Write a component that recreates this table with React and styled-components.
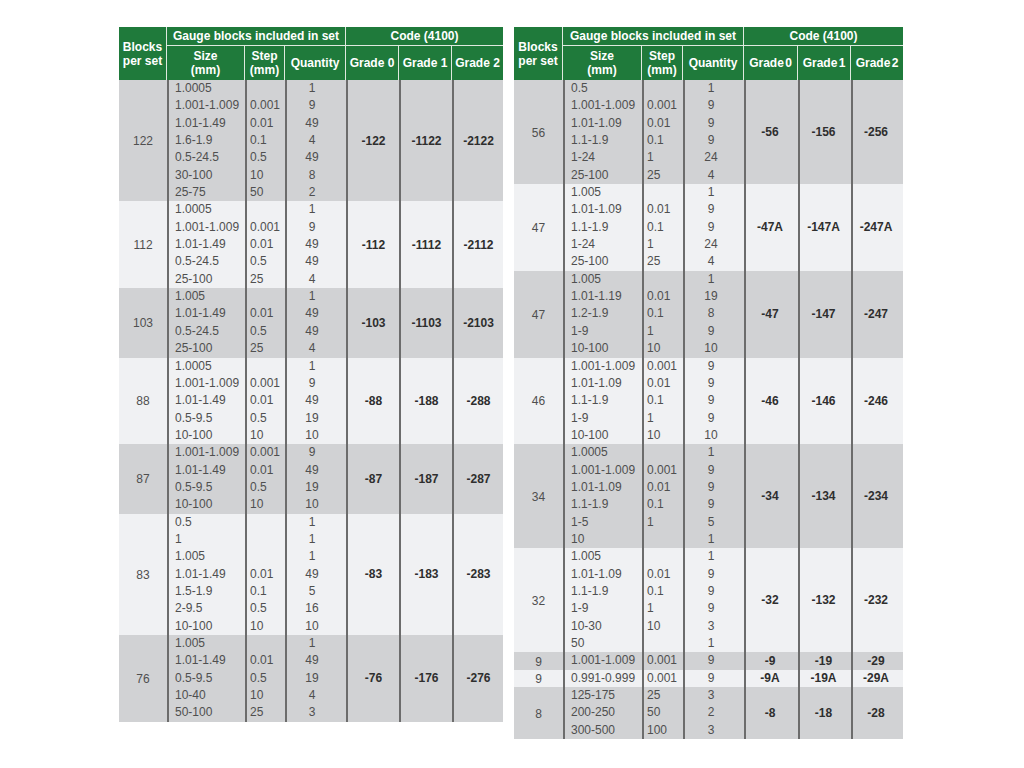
import React from "react";
import styled, { createGlobalStyle } from "styled-components";

const GlobalStyle = createGlobalStyle`
  body {
    margin: 0;
    background: #ffffff;
    font-family: "Liberation Sans", Arial, sans-serif;
  }
`;

const leftSets = [
  { n: "122", codes: ["-122", "-1122", "-2122"], rows: [["1.0005", "", "1"], ["1.001-1.009", "0.001", "9"], ["1.01-1.49", "0.01", "49"], ["1.6-1.9", "0.1", "4"], ["0.5-24.5", "0.5", "49"], ["30-100", "10", "8"], ["25-75", "50", "2"]] },
  { n: "112", codes: ["-112", "-1112", "-2112"], rows: [["1.0005", "", "1"], ["1.001-1.009", "0.001", "9"], ["1.01-1.49", "0.01", "49"], ["0.5-24.5", "0.5", "49"], ["25-100", "25", "4"]] },
  { n: "103", codes: ["-103", "-1103", "-2103"], rows: [["1.005", "", "1"], ["1.01-1.49", "0.01", "49"], ["0.5-24.5", "0.5", "49"], ["25-100", "25", "4"]] },
  { n: "88", codes: ["-88", "-188", "-288"], rows: [["1.0005", "", "1"], ["1.001-1.009", "0.001", "9"], ["1.01-1.49", "0.01", "49"], ["0.5-9.5", "0.5", "19"], ["10-100", "10", "10"]] },
  { n: "87", codes: ["-87", "-187", "-287"], rows: [["1.001-1.009", "0.001", "9"], ["1.01-1.49", "0.01", "49"], ["0.5-9.5", "0.5", "19"], ["10-100", "10", "10"]] },
  { n: "83", codes: ["-83", "-183", "-283"], rows: [["0.5", "", "1"], ["1", "", "1"], ["1.005", "", "1"], ["1.01-1.49", "0.01", "49"], ["1.5-1.9", "0.1", "5"], ["2-9.5", "0.5", "16"], ["10-100", "10", "10"]] },
  { n: "76", codes: ["-76", "-176", "-276"], rows: [["1.005", "", "1"], ["1.01-1.49", "0.01", "49"], ["0.5-9.5", "0.5", "19"], ["10-40", "10", "4"], ["50-100", "25", "3"]] },
];

const rightSets = [
  { n: "56", codes: ["-56", "-156", "-256"], rows: [["0.5", "", "1"], ["1.001-1.009", "0.001", "9"], ["1.01-1.09", "0.01", "9"], ["1.1-1.9", "0.1", "9"], ["1-24", "1", "24"], ["25-100", "25", "4"]] },
  { n: "47", codes: ["-47A", "-147A", "-247A"], rows: [["1.005", "", "1"], ["1.01-1.09", "0.01", "9"], ["1.1-1.9", "0.1", "9"], ["1-24", "1", "24"], ["25-100", "25", "4"]] },
  { n: "47", codes: ["-47", "-147", "-247"], rows: [["1.005", "", "1"], ["1.01-1.19", "0.01", "19"], ["1.2-1.9", "0.1", "8"], ["1-9", "1", "9"], ["10-100", "10", "10"]] },
  { n: "46", codes: ["-46", "-146", "-246"], rows: [["1.001-1.009", "0.001", "9"], ["1.01-1.09", "0.01", "9"], ["1.1-1.9", "0.1", "9"], ["1-9", "1", "9"], ["10-100", "10", "10"]] },
  { n: "34", codes: ["-34", "-134", "-234"], rows: [["1.0005", "", "1"], ["1.001-1.009", "0.001", "9"], ["1.01-1.09", "0.01", "9"], ["1.1-1.9", "0.1", "9"], ["1-5", "1", "5"], ["10", "", "1"]] },
  { n: "32", codes: ["-32", "-132", "-232"], rows: [["1.005", "", "1"], ["1.01-1.09", "0.01", "9"], ["1.1-1.9", "0.1", "9"], ["1-9", "1", "9"], ["10-30", "10", "3"], ["50", "", "1"]] },
  { n: "9", codes: ["-9", "-19", "-29"], rows: [["1.001-1.009", "0.001", "9"]] },
  { n: "9", codes: ["-9A", "-19A", "-29A"], rows: [["0.991-0.999", "0.001", "9"]] },
  { n: "8", codes: ["-8", "-18", "-28"], rows: [["125-175", "25", "3"], ["200-250", "50", "2"], ["300-500", "100", "3"]] },
];

const Page = styled.div`
  display: flex;
  align-items: flex-start;
  gap: 11px;
  padding: 27px 0 0 119px;
`;

const Table = styled.div`
  display: grid;
  grid-template-columns: ${(p) => p.$cols};
  grid-template-rows: 19px 34px;
  grid-auto-rows: auto;
  color: #4f4f4f;
  font-size: 12px;
`;

const HeadCell = styled.div`
  background: #1f7a3b;
  color: #ffffff;
  font-weight: bold;
  font-size: 12px;
  line-height: 14px;
  display: flex;
  align-items: center;
  justify-content: center;
  text-align: center;
  box-sizing: border-box;
  border-right: ${(p) => (p.$last ? "none" : "1px solid #dfe9df")};
  border-bottom: ${(p) => (p.$top ? "1px solid #dfe9df" : "none")};
  grid-row: ${(p) => p.$row || "auto"};
  grid-column: ${(p) => p.$col || "auto"};
  word-spacing: ${(p) => (p.$tight ? "-2px" : "normal")};
`;

const Cell = styled.div`
  background: ${(p) => (p.$shade ? "#d1d2d4" : "#f0f1f3")};
  box-sizing: border-box;
  border-left: ${(p) => (p.$first ? "none" : "2px solid #6c6c6c")};
`;

const BlockCell = styled(Cell)`
  display: flex;
  align-items: center;
  justify-content: center;
  padding-top: 1px;
`;

const ListCell = styled(Cell)`
  padding-left: ${(p) => p.$pad || "0"};
  padding-right: ${(p) => p.$padRight || "0"};
  text-align: ${(p) => p.$align || "left"};
`;

const Line = styled.div`
  height: 17.35px;
  line-height: 17.35px;
  white-space: nowrap;
`;

const CodeCell = styled(Cell)`
  display: flex;
  align-items: center;
  justify-content: center;
  padding-right: ${(p) => p.$padRight || "0"};
  font-weight: bold;
  color: #2e2e2e;
`;

const GaugeTable = ({ sets, cols, tight, qtyPad }) => (
  <Table $cols={cols}>
    <HeadCell $row="1 / span 2">Blocks<br />per set</HeadCell>
    <HeadCell $col="2 / span 3" $top>Gauge blocks included in set</HeadCell>
    <HeadCell $col="5 / span 3" $top $last>Code (4100)</HeadCell>
    <HeadCell>Size<br />(mm)</HeadCell>
    <HeadCell>Step<br />(mm)</HeadCell>
    <HeadCell>Quantity</HeadCell>
    <HeadCell $tight={tight}>Grade 0</HeadCell>
    <HeadCell $tight={tight}>Grade 1</HeadCell>
    <HeadCell $tight={tight} $last>Grade 2</HeadCell>
    {sets.map((set, i) => {
      const shade = i % 2 === 0;
      return (
        <React.Fragment key={i}>
          <BlockCell $shade={shade} $first>{set.n}</BlockCell>
          <ListCell $shade={shade} $pad="6px">
            {set.rows.map((r, j) => <Line key={j}>{r[0]}</Line>)}
          </ListCell>
          <ListCell $shade={shade} $pad="3px">
            {set.rows.map((r, j) => <Line key={j}>{r[1]}</Line>)}
          </ListCell>
          <ListCell $shade={shade} $align="center" $padRight={qtyPad}>
            {set.rows.map((r, j) => <Line key={j}>{r[2]}</Line>)}
          </ListCell>
          {set.codes.map((c, k) => (
            <CodeCell key={k} $shade={shade} $padRight={tight ? "4px" : "0"}>{c}</CodeCell>
          ))}
        </React.Fragment>
      );
    })}
  </Table>
);

export default function App() {
  return (
    <>
      <GlobalStyle />
      <Page>
        <GaugeTable sets={leftSets} cols="48px 78px 40px 61px 53px 53px 51px" qtyPad="9px" />
        <GaugeTable sets={rightSets} cols="49px 79px 41px 61px 54px 53px 52px" qtyPad="7px" tight />
      </Page>
    </>
  );
}
